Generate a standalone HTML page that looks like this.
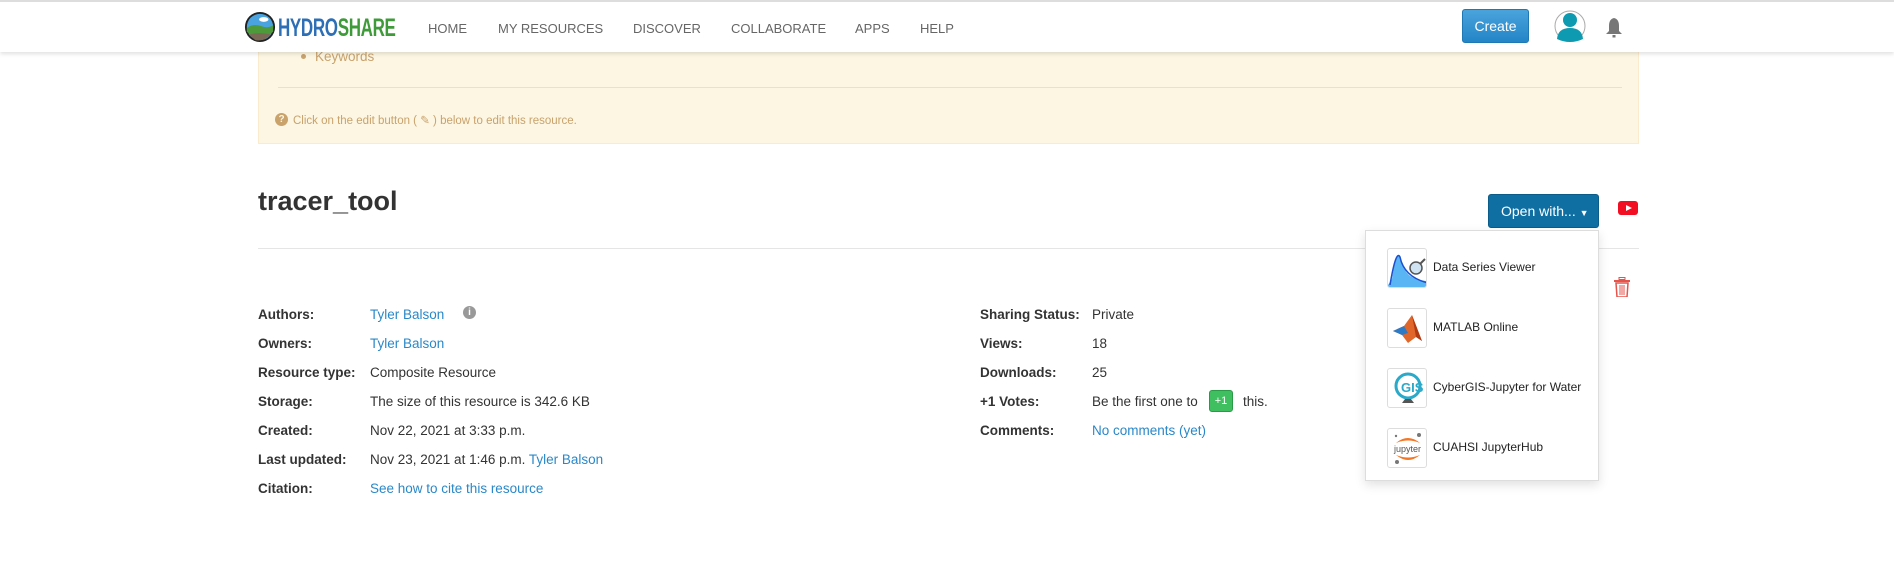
<!DOCTYPE html>
<html><head><meta charset="utf-8"><style>
*{box-sizing:border-box;margin:0;padding:0}
body{width:1894px;height:561px;background:#fff;font-family:"Liberation Sans",sans-serif;color:#333;position:relative;overflow:hidden}
.abs{position:absolute}
.nav{position:absolute;left:0;top:0;width:1894px;height:52px;background:#fff;border-top:2px solid #ddd;box-shadow:0 2px 4px rgba(0,0,0,.12);z-index:5}
.nav .item{position:absolute;top:19px;font-size:13px;color:#666}
.alert{position:absolute;left:258px;top:40px;width:1381px;height:104px;background:#fcf6e3;border:1px solid #faebcc;border-top:none}
.lbl{position:absolute;font-size:13.5px;font-weight:bold;color:#333}
.val{position:absolute;font-size:13.5px;color:#333}
a,.lnk{color:#2a88c8;text-decoration:none}
.dd{position:absolute;left:1365px;top:230px;width:234px;height:251px;background:#fff;border:1px solid #ddd;box-shadow:0 4px 10px rgba(0,0,0,.12)}
.di{position:absolute;left:21px;width:40px;height:40px;border:1px solid #ddd;border-radius:3px;background:#fff;overflow:hidden}
.dt{position:absolute;left:67px;font-size:12px;color:#222}
</style></head><body>
<div class="nav">
  <svg class="abs" style="left:244px;top:9px" width="32" height="32" viewBox="0 0 34 34">
    <circle cx="17" cy="17" r="16" fill="#222"/>
    <circle cx="17" cy="17" r="14" fill="#4aa3df"/>
    <path d="M3 18 Q10 13 18 16 Q25 19 31 15 L31 22 Q17 34 3 22Z" fill="#4c9a3a"/>
    <path d="M5 25 Q17 22 29 25 Q20 33 12 31Z" fill="#7a6a55"/>
    <ellipse cx="21" cy="9" rx="5" ry="2.5" fill="#fff"/>
  </svg>
  <div class="abs" style="left:278px;top:12px;font-weight:bold;font-size:25px;letter-spacing:-0.5px;transform:scaleX(.68);transform-origin:left;white-space:nowrap"><span style="color:#2d6fb6">HYDRO</span><span style="color:#3f9a3a">SHARE</span></div>
  <div class="item" style="left:428px">HOME</div>
  <div class="item" style="left:498px">MY RESOURCES</div>
  <div class="item" style="left:633px">DISCOVER</div>
  <div class="item" style="left:731px">COLLABORATE</div>
  <div class="item" style="left:855px">APPS</div>
  <div class="item" style="left:920px">HELP</div>
  <div class="abs" style="left:1462px;top:7px;width:67px;height:34px;background:linear-gradient(#4aa3dc,#2385c7);border:1px solid #1f78b4;border-radius:3px;color:#fff;font-size:14px;text-align:center;line-height:32px">Create</div>
  <svg class="abs" style="left:1554px;top:7px" width="32" height="34" viewBox="0 0 32 34">
    <circle cx="16" cy="17" r="15" fill="#fff" stroke="#aaa" stroke-width="1"/>
    <circle cx="16" cy="11" r="7" fill="#0e9ab0"/>
    <path d="M3 30 Q4 19 16 19 Q28 19 29 30 Q16 36 3 30Z" fill="#0e9ab0"/>
  </svg>
  <svg class="abs" style="left:1605px;top:15px" width="18" height="22" viewBox="0 0 18 22">
    <path d="M9 1 Q4 2 4 9 L4 14 L1 17 L17 17 L14 14 L14 9 Q14 2 9 1Z" fill="#777"/>
    <rect x="7.5" y="18" width="3" height="2.5" fill="#777"/>
  </svg>
</div>
<div class="alert">
  <div class="abs" style="left:42px;top:14px;width:5px;height:5px;border-radius:50%;background:#c9a26c"></div>
  <div class="abs" style="left:56px;top:9px;font-size:13.5px;color:#c9a26c">Keywords</div>
  <div class="abs" style="left:19px;top:47px;width:1344px;height:1px;background:#f7dfb4"></div>
  <div class="abs" style="left:16px;top:73px;width:13px;height:13px;border-radius:50%;background:#c9a26c;color:#fdf6e3;font-size:10px;font-weight:bold;text-align:center;line-height:13px">?</div>
  <div class="abs" style="left:34px;top:73px;font-size:11.5px;color:#c9a26c">Click on the edit button ( ✎ ) below to edit this resource.</div>
</div>
<div class="abs" style="left:258px;top:186px;font-size:27px;font-weight:bold;color:#333">tracer_tool</div>
<div class="abs" style="left:258px;top:248px;width:1381px;height:1px;background:#e5e5e5"></div>
<div class="abs" style="left:1488px;top:194px;width:111px;height:34px;background:#0f6fa3;border:1px solid #0b5c88;border-radius:3px;color:#fff;font-size:14px;line-height:32px;padding-left:12px">Open with... <span style="font-size:9px">▼</span></div>
<div class="abs" style="left:1618px;top:201px;width:20px;height:14px;background:#f20f23;border-radius:3px"></div>
<div class="abs" style="left:1626px;top:205px;width:0;height:0;border-left:6px solid #fff;border-top:3px solid transparent;border-bottom:3px solid transparent"></div>
<div class="dd">
  <div class="di" style="top:17px"><svg width="40" height="40" viewBox="0 0 40 40"><path d="M0 36 L4 30 Q8 2 12 8 Q16 24 24 28 Q32 32 40 32 L40 40 L0 40Z" fill="#5ab5f5"/><path d="M2 36 Q8 0 12 8 Q16 28 40 34" stroke="#1b4fd0" stroke-width="1.5" fill="none"/><circle cx="28" cy="19" r="6" fill="#cfe3f2" stroke="#555" stroke-width="1.5"/><line x1="32" y1="15" x2="37" y2="10" stroke="#555" stroke-width="2"/></svg></div>
  <div class="dt" style="top:29px">Data Series Viewer</div>
  <div class="di" style="top:77px"><svg width="40" height="40" viewBox="0 0 40 40"><path d="M5 22 L16 17 L24 6 L34 32 L28 28 L20 34 L14 26Z" fill="#e0662a"/><path d="M5 22 L16 17 L20 24 L14 26Z" fill="#2d7bc6"/><path d="M24 6 L34 32 L28 28Z" fill="#b13a13"/></svg></div>
  <div class="dt" style="top:89px">MATLAB Online</div>
  <div class="di" style="top:137px"><svg width="40" height="40" viewBox="0 0 40 40"><circle cx="20" cy="17" r="12" fill="none" stroke="#2aa9c9" stroke-width="3"/><text x="13" y="23" font-size="13" font-weight="bold" fill="#2aa9c9" font-family="Liberation Sans">GIS</text><path d="M14 34 L26 34 L23 30 L17 30Z" fill="#555"/></svg></div>
  <div class="dt" style="top:149px">CyberGIS-Jupyter for Water</div>
  <div class="di" style="top:197px"><svg width="40" height="40" viewBox="0 0 40 40"><path d="M8 14 Q20 4 32 14 Q20 9 8 14Z" fill="#f37726"/><path d="M8 26 Q20 36 32 26 Q20 31 8 26Z" fill="#f37726"/><text x="6" y="23" font-size="9" fill="#555" font-family="Liberation Sans">jupyter</text><circle cx="9" cy="33" r="2" fill="#777"/><circle cx="31" cy="6" r="2" fill="#777"/><circle cx="8" cy="7" r="1.2" fill="#777"/></svg></div>
  <div class="dt" style="top:209px">CUAHSI JupyterHub</div>
</div>
<svg class="abs" style="left:1614px;top:277px" width="16" height="20" viewBox="0 0 16 20"><rect x="5" y="0.5" width="6" height="2" fill="none" stroke="#e5534b"/><rect x="0" y="3" width="16" height="2" fill="#e5534b"/><path d="M2 6 L14 6 L13 20 L3 20Z" fill="none" stroke="#e5534b" stroke-width="1.5"/><line x1="6" y1="8" x2="6" y2="18" stroke="#e5534b"/><line x1="8" y1="8" x2="8" y2="18" stroke="#e5534b"/><line x1="10" y1="8" x2="10" y2="18" stroke="#e5534b"/></svg>

<div class="lbl" style="left:258px;top:307px">Authors:</div><div class="val" style="left:370px;top:307px"><a>Tyler Balson</a></div>
<div class="abs" style="left:463px;top:306px;width:13px;height:13px;border-radius:50%;background:#999;color:#fff;font-size:10px;font-weight:bold;text-align:center;line-height:13px">i</div>
<div class="lbl" style="left:258px;top:336px">Owners:</div><div class="val" style="left:370px;top:336px"><a>Tyler Balson</a></div>
<div class="lbl" style="left:258px;top:365px">Resource type:</div><div class="val" style="left:370px;top:365px">Composite Resource</div>
<div class="lbl" style="left:258px;top:394px">Storage:</div><div class="val" style="left:370px;top:394px">The size of this resource is 342.6 KB</div>
<div class="lbl" style="left:258px;top:423px">Created:</div><div class="val" style="left:370px;top:423px">Nov 22, 2021 at 3:33 p.m.</div>
<div class="lbl" style="left:258px;top:452px">Last updated:</div><div class="val" style="left:370px;top:452px">Nov 23, 2021 at 1:46 p.m. <a>Tyler Balson</a></div>
<div class="lbl" style="left:258px;top:481px">Citation:</div><div class="val" style="left:370px;top:481px"><a>See how to cite this resource</a></div>

<div class="lbl" style="left:980px;top:307px">Sharing Status:</div><div class="val" style="left:1092px;top:307px">Private</div>
<div class="lbl" style="left:980px;top:336px">Views:</div><div class="val" style="left:1092px;top:336px">18</div>
<div class="lbl" style="left:980px;top:365px">Downloads:</div><div class="val" style="left:1092px;top:365px">25</div>
<div class="lbl" style="left:980px;top:394px">+1 Votes:</div><div class="val" style="left:1092px;top:394px">Be the first one to</div>
<div class="abs" style="left:1209px;top:390px;width:24px;height:22px;background:#3fbf5f;border:1px solid #2a9a47;border-radius:3px;color:#fff;font-size:11px;text-align:center;line-height:20px">+1</div>
<div class="val" style="left:1243px;top:394px">this.</div>
<div class="lbl" style="left:980px;top:423px">Comments:</div><div class="val" style="left:1092px;top:423px"><a>No comments (yet)</a></div>
</body></html>
